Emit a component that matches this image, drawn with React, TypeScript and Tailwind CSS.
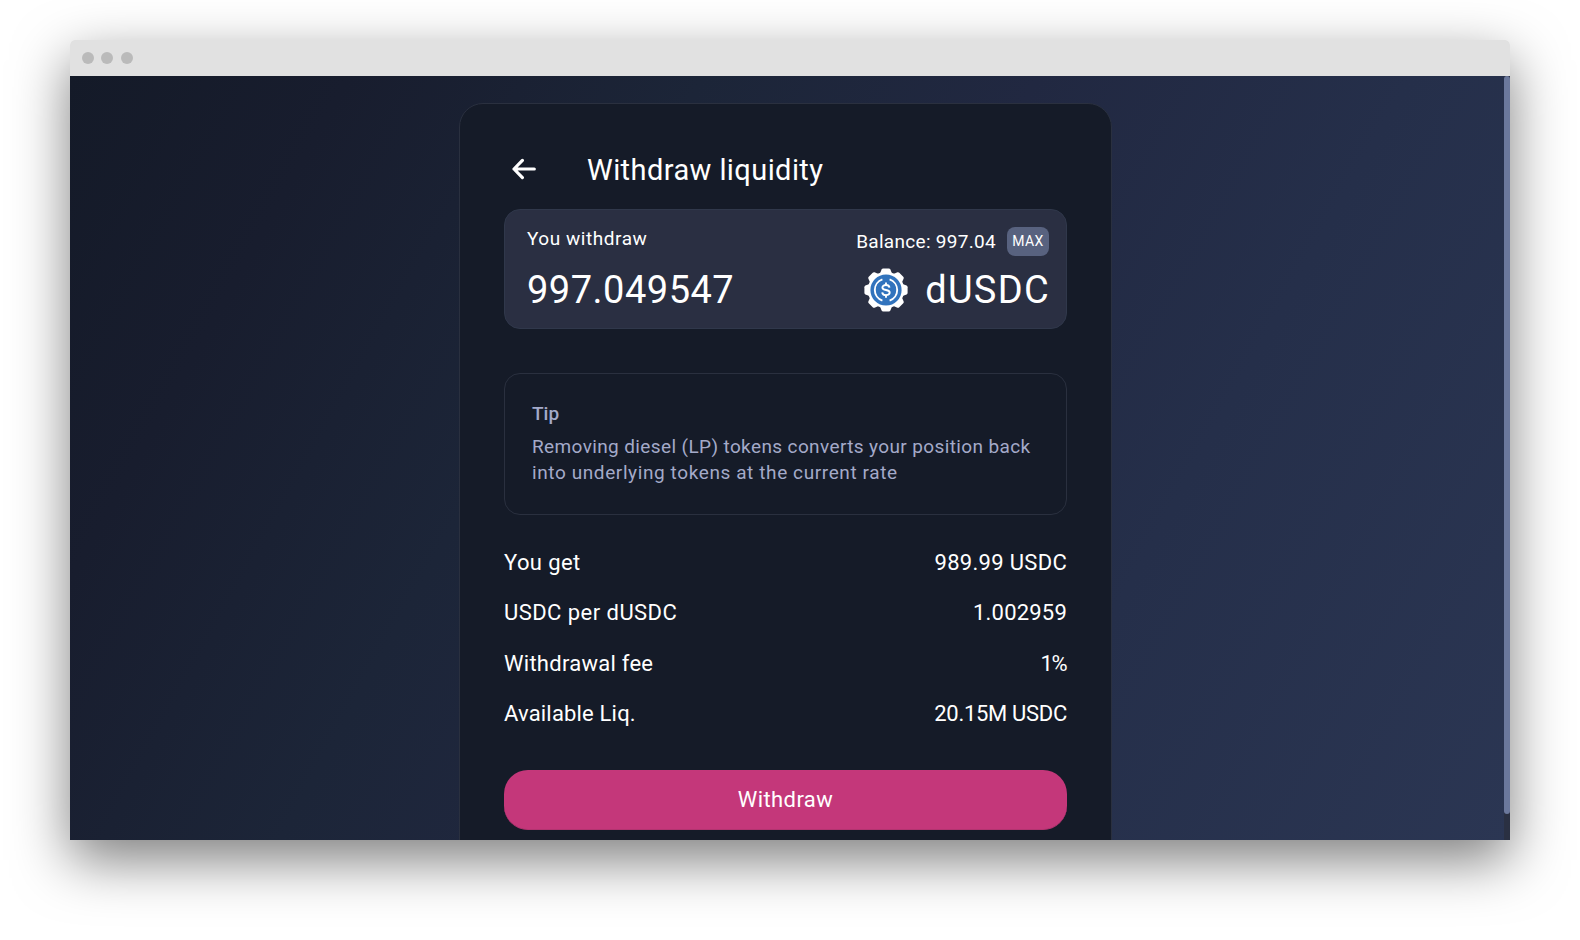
const details = [
  { label: "You get", value: "989.99 USDC", labelClass: "tracking-[0.4px]", valueClass: "tracking-[0.3px]" },
  { label: "USDC per dUSDC", value: "1.002959", labelClass: "tracking-[0.45px]", valueClass: "tracking-[0.2px]" },
  { label: "Withdrawal fee", value: "1%", labelClass: "tracking-[0.26px]", valueClass: "mr-px tracking-[-1.5px]" },
  { label: "Available Liq.", value: "20.15M USDC", labelClass: "tracking-[0.18px]", valueClass: "tracking-[-0.3px]" },
];

const teeth = [0, 45, 90, 135, 180, 225, 270, 315];

function TokenLogo() {
  return (
    <svg viewBox="-22 -22 44 44" className="size-11 shrink-0">
      <g fill="#fff">
        <circle r="18.2" />
        {teeth.map((angle) => (
          <path
            key={angle}
            transform={`rotate(${angle})`}
            d="M-6 -16.5 L-4.4 -20.6 Q-3.9 -21.6 -2.8 -21.6 H2.8 Q3.9 -21.6 4.4 -20.6 L6 -16.5 Z"
          />
        ))}
      </g>
      <circle r="15.6" fill="#3173bd" />
      <g fill="none" stroke="#fff" strokeWidth="1.9">
        <path d="M-3.6 -10.6 A11.2 11.2 0 0 0 -3.6 10.6" />
        <path d="M3.6 -10.6 A11.2 11.2 0 0 1 3.6 10.6" />
        <path d="M3.5 -2.4 C3.2 -4.3 1.9 -5 0 -5 C-2.2 -5 -3.6 -4 -3.6 -2.5 C-3.6 -0.9 -2.2 -0.4 0 0 C2.4 0.4 3.7 1 3.7 2.6 C3.7 4.2 2.2 5.1 0 5.1 C-2.1 5.1 -3.6 4.2 -3.8 2.3" />
        <path d="M0 -7.6 V-4.6 M0 4.8 V7.8" />
      </g>
    </svg>
  );
}

function BackArrow() {
  return (
    <svg viewBox="0 0 24 22" className="h-[22px] w-6" fill="none" stroke="#fff" strokeWidth="3.2" strokeLinecap="round" strokeLinejoin="round">
      <path d="M22.3 11 H2 M10.4 2.4 L2 11 L10.4 19.6" />
    </svg>
  );
}

export default function App() {
  return (
    <div className="h-[940px] w-[1580px] overflow-hidden bg-white px-[70px] pt-10 font-['Roboto',sans-serif] text-white">
      <div className="flex h-[800px] w-[1440px] flex-col overflow-hidden rounded-t-[5px] shadow-[0_20px_55px_rgba(0,0,0,0.51)]">
        <div className="flex h-9 shrink-0 items-center bg-[#e1e1e1] pl-3">
          <span className="size-3 rounded-full bg-[#bababa]" />
          <span className="ml-[7px] size-3 rounded-full bg-[#bababa]" />
          <span className="ml-2 size-3 rounded-full bg-[#bababa]" />
        </div>

        <div className="flex min-h-0 flex-1 bg-[linear-gradient(119deg,#141a28_0%,#181d2e_15%,#1c2538_34%,#212841_52%,#252f4a_72%,#2b3653_100%)]">
          <main className="min-w-0 flex-1 pt-[27px] pl-[389px]">
            <section className="h-[760px] w-[653px] rounded-t-[24px] border border-[#2a303f] bg-[#151b28] pr-11 pl-11">
              <header className="flex h-[105px] items-center pt-[27px]">
                <button className="-mt-[3px] ml-2" aria-label="Back">
                  <BackArrow />
                </button>
                <h1 className="ml-[51px] text-[29px] leading-9 tracking-[0.42px]">Withdraw liquidity</h1>
              </header>

              <div className="flex h-[120px] justify-between rounded-2xl border border-[#30384b] bg-[#2a2f42] pt-[17px] pr-[17px] pl-[22px]">
                <div className="flex flex-col gap-[18px]">
                  <span className="text-[19px] leading-[23px] tracking-[0.55px]">You withdraw</span>
                  <span className="text-[38px] leading-[44px] tracking-[0.5px]">997.049547</span>
                </div>
                <div className="flex flex-col items-end gap-[11.5px]">
                  <div className="flex h-[29px] items-center">
                    <span className="text-[19px] leading-[29px] tracking-[0.3px]">Balance: 997.04</span>
                    <button className="ml-[11px] h-[29px] w-[42px] rounded-[8px] bg-[#58627f] text-center text-[14px] leading-[29px] tracking-[0.4px]">
                      MAX
                    </button>
                  </div>
                  <div className="-mr-[1px] flex h-11 items-center gap-[17px]">
                    <TokenLogo />
                    <span className="text-[38px] leading-[44px] tracking-[1.3px]">dUSDC</span>
                  </div>
                </div>
              </div>

              <div className="mt-11 h-[142px] rounded-2xl border border-[#2a303f] pt-[27px] pl-[27px] text-[19px] leading-[26px] text-[#a4aac9]">
                <p className="font-medium">Tip</p>
                <p className="mt-[7px] tracking-[0.38px]">
                  Removing diesel (LP) tokens converts your position back
                  <br />
                  <span className="tracking-[0.6px]">into underlying tokens at the current rate</span>
                </p>
              </div>

              <dl className="mt-[22.5px]">
                {details.map((row) => (
                  <div key={row.label} className="flex h-[50.5px] items-center justify-between text-[22px] leading-[26px]">
                    <dt className={row.labelClass}>{row.label}</dt>
                    <dd className={row.valueClass}>{row.value}</dd>
                  </div>
                ))}
              </dl>

              <button className="mt-[30.5px] block h-[60px] w-full rounded-[24px] border-b border-[#b23470] bg-[#c4377a] text-center text-[22px] leading-[59px] tracking-[0.4px]">
                Withdraw
              </button>
            </section>
          </main>

          <div className="w-[6px] shrink-0 bg-[#2a3042]">
            <div className="h-[738px] rounded-[3px] bg-[#6b789c]" />
          </div>
        </div>
      </div>
    </div>
  );
}
